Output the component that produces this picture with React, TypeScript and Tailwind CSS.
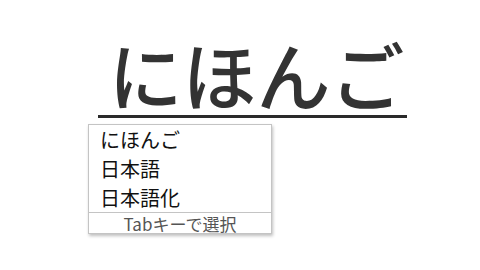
export default function App() {
  return (
    <div className="w-[480px] h-[270px] bg-white overflow-hidden font-['Noto_Sans_CJK_JP',sans-serif]">
      <div className="pt-[36px] pl-[98px]">
        <div className="w-[309px] h-[82px] border-b-[3px] border-[#2a2a2a] flex justify-center items-start">
          <span className="text-[74px] leading-none font-medium text-[#333] whitespace-nowrap ml-[8px]">にほんご</span>
        </div>
      </div>
      <div className="ml-[88px] mt-[6px] w-[184px] border border-[#c4c4c4] bg-white shadow-[1px_2px_3px_rgba(0,0,0,0.25)]">
        <ul>
          <li className="px-[11px] h-[29px] flex items-center text-[20px] leading-none text-[#111] whitespace-nowrap">にほんご</li>
          <li className="px-[11px] h-[29px] flex items-center text-[20px] leading-none text-[#111] whitespace-nowrap">日本語</li>
          <li className="px-[11px] h-[29px] flex items-center text-[20px] leading-none text-[#111] whitespace-nowrap">日本語化</li>
        </ul>
        <div className="border-t border-[#c4c4c4] h-[21px] flex items-center justify-center text-[17px] leading-none text-[#555] whitespace-nowrap">
          Tabキーで選択
        </div>
      </div>
    </div>
  )
}
